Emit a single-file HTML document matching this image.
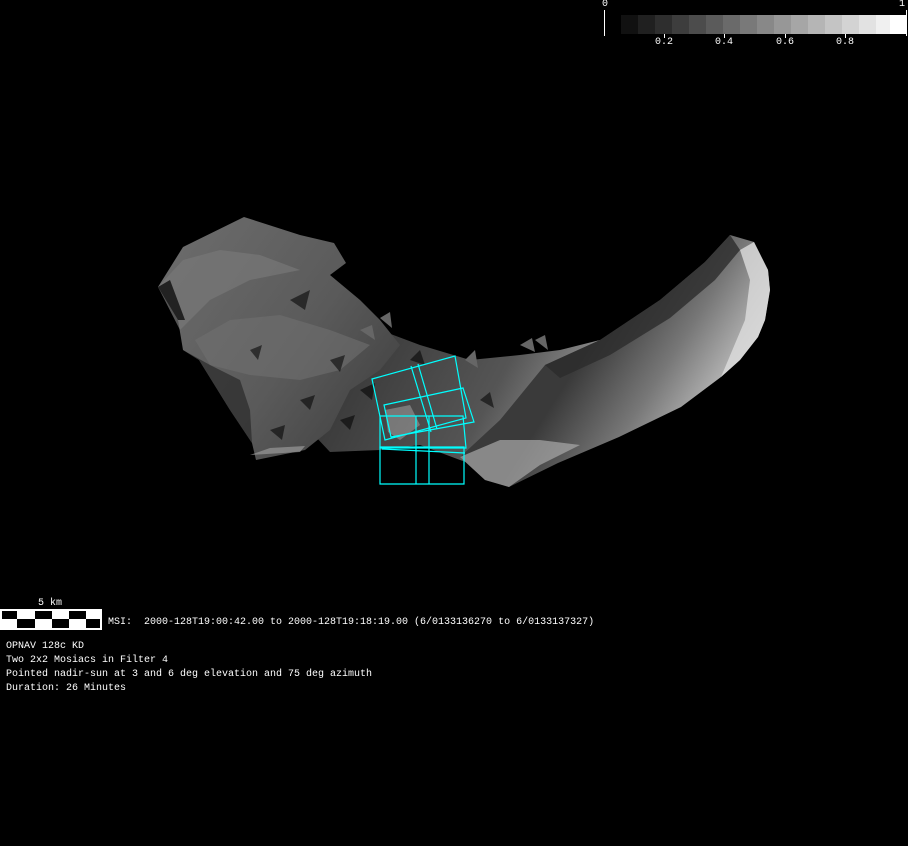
<!DOCTYPE html>
<html><head><meta charset="utf-8"><style>
html,body{margin:0;padding:0;background:#000;width:908px;height:846px;overflow:hidden;position:relative}
.t{position:absolute;color:#fff;font-family:"Liberation Mono",monospace;font-size:10px;line-height:14px;white-space:pre}
</style></head><body>
<svg width="908" height="846" style="position:absolute;left:0;top:0">
<defs>
<linearGradient id="horn" x1="600" y1="330" x2="740" y2="420" gradientUnits="userSpaceOnUse">
<stop offset="0" stop-color="#3a3a3a"/><stop offset="0.45" stop-color="#777"/><stop offset="0.8" stop-color="#b5b5b5"/><stop offset="1" stop-color="#e8e8e8"/></linearGradient>
<linearGradient id="blob" x1="170" y1="260" x2="420" y2="440" gradientUnits="userSpaceOnUse">
<stop offset="0" stop-color="#6a6a6a"/><stop offset="0.5" stop-color="#5a5a5a"/><stop offset="1" stop-color="#3a3a3a"/></linearGradient>
<linearGradient id="mid" x1="350" y1="360" x2="560" y2="470" gradientUnits="userSpaceOnUse">
<stop offset="0" stop-color="#3a3a3a"/><stop offset="0.6" stop-color="#555"/><stop offset="1" stop-color="#999"/></linearGradient>
</defs>
<!-- colorbar -->
<g>
<rect x="621" y="15" width="17" height="19" fill="#111"/><rect x="638" y="15" width="17" height="19" fill="#202020"/>
<rect x="655" y="15" width="17" height="19" fill="#2e2e2e"/><rect x="672" y="15" width="17" height="19" fill="#3d3d3d"/>
<rect x="689" y="15" width="17" height="19" fill="#4c4c4c"/><rect x="706" y="15" width="17" height="19" fill="#5b5b5b"/>
<rect x="723" y="15" width="17" height="19" fill="#6a6a6a"/><rect x="740" y="15" width="17" height="19" fill="#797979"/>
<rect x="757" y="15" width="17" height="19" fill="#888"/><rect x="774" y="15" width="17" height="19" fill="#979797"/>
<rect x="791" y="15" width="17" height="19" fill="#a6a6a6"/><rect x="808" y="15" width="17" height="19" fill="#b5b5b5"/>
<rect x="825" y="15" width="17" height="19" fill="#c4c4c4"/><rect x="842" y="15" width="17" height="19" fill="#d3d3d3"/>
<rect x="859" y="15" width="17" height="19" fill="#e2e2e2"/><rect x="876" y="15" width="14" height="19" fill="#f0f0f0"/>
<rect x="890" y="15" width="16" height="19" fill="#fff"/>
<line x1="604.5" y1="10" x2="604.5" y2="36" stroke="#fff"/>
<line x1="906.5" y1="10" x2="906.5" y2="36" stroke="#fff"/>
<g stroke="#fff"><line x1="664.5" y1="34" x2="664.5" y2="38"/><line x1="724.5" y1="34" x2="724.5" y2="38"/><line x1="785.5" y1="34" x2="785.5" y2="38"/><line x1="845.5" y1="34" x2="845.5" y2="38"/></g>
</g>
<!-- asteroid middle -->
<path d="M330,340 L380,330 L420,345 L470,360 L520,355 L560,350 L600,340 L560,400 L520,440 L490,470 L460,460 L420,445 L380,450 L330,452 L300,420 Z" fill="url(#mid)"/>
<!-- horn -->
<path d="M545,365 L600,340 L660,300 L705,262 L730,235 L754,242 L768,270 L770,290 L765,320 L758,337 L740,360 L721,377 L681,407 L619,437 L558,463 L509,487 L485,480 L460,457 L500,420 Z" fill="url(#horn)"/>
<path d="M545,365 L600,340 L660,300 L705,262 L730,235 L740,250 L715,280 L670,318 L610,355 L560,378 Z" fill="#2c2c2c" opacity="0.8"/>
<path d="M740,250 L754,242 L768,270 L770,290 L765,320 L758,337 L740,360 L721,377 L745,320 L750,280 Z" fill="#ddd" opacity="0.8"/>
<path d="M460,457 L500,440 L540,440 L580,445 L540,465 L509,487 L485,480 Z" fill="#aaa" opacity="0.7"/>
<!-- left blob -->
<path d="M183,247 L244,217 L300,235 L334,243 L346,263 L330,275 L360,300 L380,320 L400,345 L380,370 L350,390 L330,430 L305,450 L256,460 L252,443 L230,410 L199,360 L183,350 L178,320 L158,287 Z" fill="url(#blob)"/>
<path d="M158,287 L183,260 L220,250 L260,255 L300,270 L250,280 L210,300 L180,330 Z" fill="#777" opacity="0.7"/>
<path d="M195,340 L230,320 L280,315 L330,330 L370,345 L340,370 L300,380 L250,375 L210,365 Z" fill="#707070" opacity="0.6"/>
<path d="M183,350 L210,365 L240,380 L250,410 L252,443 L230,410 L199,360 Z" fill="#2a2a2a" opacity="0.7"/>
<path d="M158,287 L170,280 L185,320 L178,320 Z" fill="#222"/>
<g fill="#000" opacity="0.55">
<path d="M290,300 L310,290 L305,310 Z"/><path d="M330,360 L345,355 L340,372 Z"/><path d="M360,390 L375,383 L372,400 Z"/>
<path d="M300,400 L315,395 L310,410 Z"/><path d="M410,360 L420,350 L425,365 Z"/><path d="M270,430 L285,425 L282,440 Z"/>
<path d="M340,420 L355,415 L350,430 Z"/><path d="M480,400 L490,392 L494,408 Z"/><path d="M250,350 L262,345 L258,360 Z"/>
</g>
<g fill="#666">
<path d="M360,330 L372,325 L375,340 Z"/><path d="M380,318 L390,312 L392,328 Z"/><path d="M520,345 L532,338 L535,352 Z"/>
<path d="M535,340 L545,335 L548,350 Z"/><path d="M465,360 L475,350 L478,368 Z"/>
</g>
<path d="M385,410 L410,405 L420,425 L400,440 L388,432 Z" fill="#aaa" opacity="0.5"/>
<path d="M250,455 L270,448 L305,446 L300,452 Z" fill="#999" opacity="0.7"/>
<!-- footprints -->
<g fill="none" stroke="#0ff" stroke-width="1.2">
<path d="M372,379 L455,356 L466,418 L385,440 Z"/>
<path d="M384,405 L463,388 L474,422 L391,437 Z"/>
<path d="M411,366 L431,432 M418,364 L437,429"/>
<path d="M380,416 L463,416 L466,448 L380,448 Z"/>
<path d="M380,447 L464,447 L464,484 L380,484 Z"/>
<path d="M382,449 L465,453 M416,416 L416,484 M429,416 L429,484"/>
</g>
<!-- scale bar -->
<rect x="0" y="609" width="102" height="21" fill="#fff"/>
<g fill="#000">
<rect x="2" y="611" width="15" height="8"/><rect x="35" y="611" width="17" height="8"/><rect x="69" y="611" width="17" height="8"/>
<rect x="17" y="619" width="18" height="9"/><rect x="52" y="619" width="17" height="9"/><rect x="86" y="619" width="14" height="9"/>
</g>
</svg>
<div class="t" style="left:38px;top:597px">5 km</div>
<div class="t" style="left:108px;top:616px">MSI:  2000-128T19:00:42.00 to 2000-128T19:18:19.00 (6/0133136270 to 6/0133137327)</div>
<div class="t" style="left:6px;top:640px">OPNAV 128c KD
Two 2x2 Mosiacs in Filter 4
Pointed nadir-sun at 3 and 6 deg elevation and 75 deg azimuth
Duration: 26 Minutes</div>
<div class="t" style="left:602px;top:-2px">0</div>
<div class="t" style="left:899px;top:-2px">1</div>
<div class="t" style="left:655px;top:36px">0.2</div>
<div class="t" style="left:715px;top:36px">0.4</div>
<div class="t" style="left:776px;top:36px">0.6</div>
<div class="t" style="left:836px;top:36px">0.8</div>
</body></html>
